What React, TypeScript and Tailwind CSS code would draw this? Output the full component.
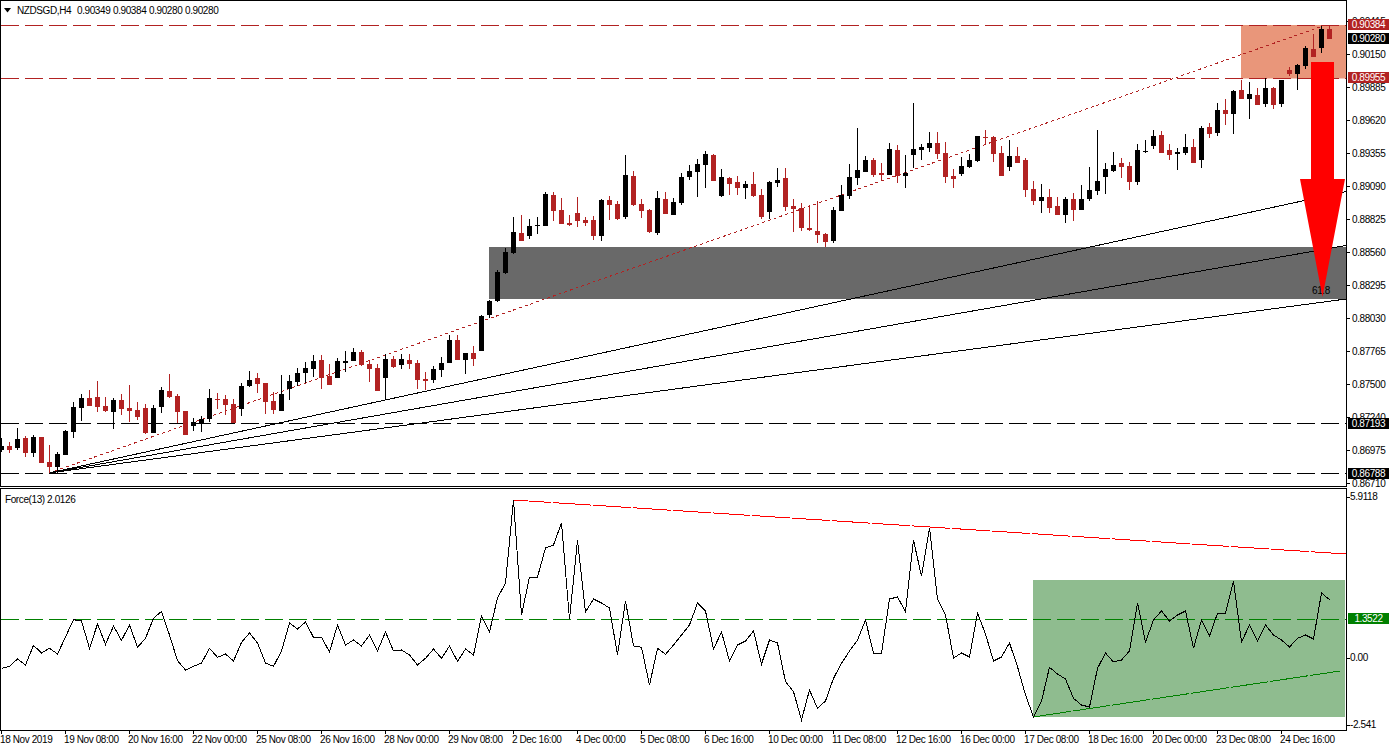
import React from "react";

type C = [number, number, number, number, number];
const seg1: C[] = [
[565,588,600,605,0],[576,588,600,608,1],[535,567,595,600,0],[558,564,608,620,1],[556,561,608,620,0],[561,561,638,638,1],[585,636,651,668,1],[606,612,651,668,0],[540,542,615,615,0],[456,471,545,563,0],
[432,444,474,513,0],[420,444,468,468,1],[393,441,471,486,1],[441,468,483,486,1],[444,450,486,537,0],[432,450,477,495,1],[405,474,483,516,1],[456,480,501,510,1],[462,474,549,552,1],[465,474,549,549,0],
[411,420,471,489,0],[372,423,441,444,1],[432,438,486,520,1],[483,483,555,555,1],[504,516,528,543,0],[498,507,519,546,0],[417,444,507,515,0],[429,447,450,477,1],[435,447,465,495,1],[447,462,520,520,1],
[399,408,477,497,0],[363,390,408,411,0],[369,384,402,429,1],[399,399,456,492,1],[426,453,480,492,1],[375,432,483,483,0],[375,393,417,450,0],[354,369,396,408,0],[336,354,369,400,0],[315,333,357,381,0],
[315,330,383,417,1],[342,378,405,405,1],[324,333,384,384,0],[303,333,339,366,0],[294,306,333,333,0],[300,306,345,348,1],[330,342,357,396,1],[342,354,423,423,1],[312,327,384,447,0],[318,327,351,354,1],
[312,327,345,357,0],[312,330,342,357,1],[330,339,390,417,1],[366,387,393,420,1],[348,357,390,399,0],[321,339,360,381,0],[255,270,339,339,0],[255,270,330,330,1],[309,309,330,372,0],[288,309,327,348,1],
[195,198,303,303,0],[150,153,195,205,0],[60,66,153,155,0],
];
const seg2: C[] = [
[475,486,549,552,0],[381,426,489,492,0],[375,429,453,453,1],[387,408,438,447,0],[381,405,408,432,0],[306,312,408,408,0],[306,315,363,393,1],[324,360,402,402,1],[375,399,405,408,1],[321,369,393,411,1],
[381,390,399,408,1],[378,390,438,450,1],[327,330,438,453,0],[318,330,345,390,1],[333,342,387,390,1],[195,255,381,387,0],[243,258,345,348,1],[327,342,363,384,1],[357,360,427,429,1],[303,324,429,435,0],
[306,327,372,372,1],[324,336,375,375,0],[249,261,339,345,0],[225,243,261,270,0],[207,222,246,321,0],[183,192,225,294,0],[192,195,273,273,1],[237,261,318,321,0],[261,264,282,315,1],[258,276,294,315,1],
[273,282,294,327,0],[246,282,318,321,1],[297,315,381,387,1],[273,276,366,387,0],[234,270,279,291,0],[234,264,351,363,1],[327,348,357,426,1],[339,354,414,423,1],[345,414,420,423,1],[333,423,435,459,1],
[429,432,456,471,1],[351,360,453,459,0],[285,315,363,363,0],[222,261,318,327,0],[114,240,264,285,0],[198,210,246,246,0],[204,210,255,261,1],[219,249,255,273,1],[159,177,255,255,0],[165,180,258,279,1],
[195,249,258,294,0],[39,177,195,234,0],
];
const seg3: C[] = [
[432,441,450,480,0],[396,429,444,456,0],[396,429,462,477,1],[426,459,531,549,1],[507,528,537,564,1],[471,498,522,528,0],[462,480,501,504,0],[408,408,483,486,0],[390,411,414,432,1],[408,411,462,486,1],
[438,459,528,528,1],[420,468,501,513,0],[441,468,489,489,1],[474,480,570,591,1],[543,567,603,615,1],[552,591,603,639,0],[567,591,624,639,1],[591,618,645,645,1],[591,597,645,669,0],[579,597,630,663,1],
[555,597,630,630,0],[501,570,597,603,0],[390,543,573,585,0],[489,507,531,582,0],[456,495,513,516,0],[474,489,501,534,1],[486,498,546,570,1],[432,450,546,555,0],[420,453,456,459,0],[390,408,438,447,0],
[393,405,459,459,1],[432,450,465,480,1],[444,456,462,510,0],[402,441,459,465,0],[417,441,489,489,1],[378,384,480,504,0],[369,381,402,414,1],[309,330,399,408,0],[297,330,342,375,1],[270,273,342,402,0],
[240,270,297,297,1],[246,282,297,357,0],[264,285,315,315,1],[234,264,312,321,0],[261,264,315,327,1],[240,240,312,321,0],[201,210,222,228,1],[192,195,222,270,0],[138,144,198,207,0],[102,147,171,171,1],
[78,87,144,159,0],[78,87,117,117,1],
];
const shift = (s: C[], base: number) => s.map((c) => [base + c[0] / 3, base + c[1] / 3, base + c[2] / 3, base + c[3] / 3, c[4]]);
const candles = [...shift(seg1, 250), ...shift(seg2, 90), ...shift(seg3, 0)];

const force = [
550,544,522,540,481,504,490,507,456,404,408,490,417,478,423,466,420,487,460,400,379,450,527,555,544,534,490,517,507,528,
472,444,474,534,544,498,414,432,411,457,457,501,420,480,465,483,450,498,441,498,495,510,540,520,492,520,483,529,492,510,
393,441,339,294,45,390,276,276,189,180,114,403,165,381,342,354,369,510,348,483,487,600,490,508,480,450,420,354,378,492,
441,528,480,468,438,537,465,474,590,620,705,615,670,648,580,535,498,465,405,505,505,342,336,380,165,274,128,342,390,519,
504,516,384,447,528,516,474,545,630,696,648,547,567,582,640,660,666,550,504,531,525,498,354,471,405,378,408,390,378,490,
405,453,385,385,288,471,420,468,420,450,465,486,460,450,462,324,344,
];
const forcePts = force.map((z, i) => `${1.5 + 8 * i},${485 + z / 3}`).join(" ");

const prices = ["0.90415","0.90150","0.89885","0.89620","0.89355","0.89090","0.88825","0.88560","0.88295","0.88030","0.87765","0.87500","0.87240","0.86975","0.86710"];
const times = ["18 Nov 2019","19 Nov 08:00","20 Nov 16:00","22 Nov 00:00","25 Nov 08:00","26 Nov 16:00","28 Nov 00:00","29 Nov 08:00","2 Dec 16:00","4 Dec 00:00","5 Dec 08:00","6 Dec 16:00","10 Dec 00:00","11 Dec 08:00","12 Dec 16:00","16 Dec 00:00","17 Dec 08:00","18 Dec 16:00","20 Dec 00:00","23 Dec 08:00","24 Dec 16:00"];
const RED = "#b22222";

function Tag({ top, label, bg }: { top: string; label: string; bg: string }) {
  return <div className={`absolute left-[1px] flex h-[11px] w-[41px] items-center justify-center text-white ${top} ${bg}`}>{label}</div>;
}

function AxisRow({ label, h, gap }: { label: string; h: string; gap: string }) {
  return (
    <div className={`flex items-center ${h}`}>
      <div className="h-px w-[3px] bg-black" />
      <span className={`leading-none ${gap}`}>{label}</span>
    </div>
  );
}

export default function App() {
  return (
    <div className="flex h-[751px] w-[1392px] flex-col overflow-hidden bg-white font-['Liberation_Sans',sans-serif] text-[10px] tracking-[-0.4px] text-black">
      {/* price pane */}
      <div className="flex h-[487px] shrink-0">
        <div className="relative h-full w-[1347px] border border-black">
          <svg width={1345} height={485} viewBox="1 1 1345 485" className="block">
            <rect x={489} y={247} width={857} height={52} fill="#696969" />
            <rect x={1241} y={25} width={105} height={53.5} fill="#e9967a" />
            <g shapeRendering="crispEdges">
              <line x1={1} x2={1346} y1={25.5} y2={25.5} stroke={RED} strokeDasharray="18 6" />
              <line x1={1} x2={1346} y1={78.5} y2={78.5} stroke={RED} strokeDasharray="18 6" />
              <line x1={1} x2={1346} y1={423.5} y2={423.5} stroke="#000" strokeDasharray="18 6" />
              <line x1={1} x2={1346} y1={473.5} y2={473.5} stroke="#000" strokeDasharray="18 6" />
              <line x1={49} y1={473} x2={1323} y2={26} stroke={RED} strokeDasharray="3 3" />
              <line x1={49} y1={473} x2={1346} y2={191.5} stroke="#000" />
              <line x1={49} y1={473} x2={1346} y2={245.5} stroke="#000" />
              <line x1={49} y1={473} x2={1346} y2={299} stroke="#000" />
              {candles.map((c, i) => {
                const cx = 1 + 8 * i;
                const col = c[4] ? RED : "#000";
                const t = Math.round(c[1]);
                const b = Math.max(Math.round(c[2]), t + 1);
                return (
                  <g key={i} fill={col}>
                    <rect x={cx} y={Math.round(c[0])} width={1} height={Math.max(Math.round(c[3]) - Math.round(c[0]), 1)} />
                    <rect x={cx - 2} y={t} width={5} height={b - t} />
                  </g>
                );
              })}
            </g>
            <text x={1312} y={294} fontSize={10} letterSpacing={-0.4} fill="#000" fontFamily="Liberation Sans">61.8</text>
            <polygon points="1311,62 1334,62 1334,179 1345,179 1322.5,297 1300,179 1311,179" fill="#ff0000" />
          </svg>
          <div className="absolute left-[3px] top-[2px] flex items-center">
            <svg width={8} height={5} viewBox="0 0 8 5" className="mr-[5px] block">
              <polygon points="0,0 7,0 3.5,4.5" fill="#000" />
            </svg>
            <span className="w-[60px]">NZDSGD,H4</span>
            <span className="w-[36px]">0.90349</span>
            <span className="w-[36px]">0.90384</span>
            <span className="w-[36px]">0.90280</span>
            <span className="w-[36px]">0.90280</span>
          </div>
        </div>
        <div className="relative w-[45px] pt-[5px]">
          {prices.map((p) => (
            <AxisRow key={p} label={p} h="h-[33px]" gap="ml-[2px]" />
          ))}
          <Tag top="top-[19px]" label="0.90384" bg="bg-[#b22222]" />
          <Tag top="top-[33px]" label="0.90280" bg="bg-black" />
          <Tag top="top-[72px]" label="0.89955" bg="bg-[#b22222]" />
          <Tag top="top-[418px]" label="0.87193" bg="bg-black" />
          <Tag top="top-[468px]" label="0.86788" bg="bg-black" />
        </div>
      </div>

      {/* force pane */}
      <div className="mt-px flex h-[243px] shrink-0">
        <div className="relative h-full w-[1347px] border border-black">
          <svg width={1345} height={241} viewBox="1 489 1345 241" className="block">
            <rect x={1033} y={580} width={312} height={137} fill="#8fbc8f" />
            <g shapeRendering="crispEdges">
              <line x1={1} x2={1346} y1={619.5} y2={619.5} stroke="#008000" strokeDasharray="18 6" />
              <line x1={513} y1={500} x2={1346} y2={554} stroke="#ff0000" strokeDasharray="38 2" />
              <line x1={1033} y1={717} x2={1340} y2={671} stroke="#008000" strokeDasharray="38 2" />
              <polyline points={forcePts} fill="none" stroke="#000" strokeWidth={1} />
            </g>
          </svg>
          <span className="absolute left-[4px] top-[3px]">Force(13) 2.0126</span>
        </div>
        <div className="relative w-[45px]">
          <div className="pt-[4px]"><AxisRow label="5.9118" h="h-[10px]" gap="ml-0" /></div>
          <div className="pt-[151px]"><AxisRow label="0.00" h="h-[10px]" gap="ml-0" /></div>
          <div className="pt-[57px]"><AxisRow label="-2.541" h="h-[10px]" gap="ml-0" /></div>
          <Tag top="top-[125px]" label="1.3522" bg="bg-[#008000] w-[36px]" />
        </div>
      </div>

      {/* time axis */}
      <div className="flex h-[20px]">
        {times.map((t) => (
          <div key={t} className="relative w-[64px] shrink-0">
            <div className="ml-px h-[3px] w-px bg-black" />
            <div className="mt-px whitespace-nowrap leading-none">{t}</div>
          </div>
        ))}
      </div>
    </div>
  );
}
